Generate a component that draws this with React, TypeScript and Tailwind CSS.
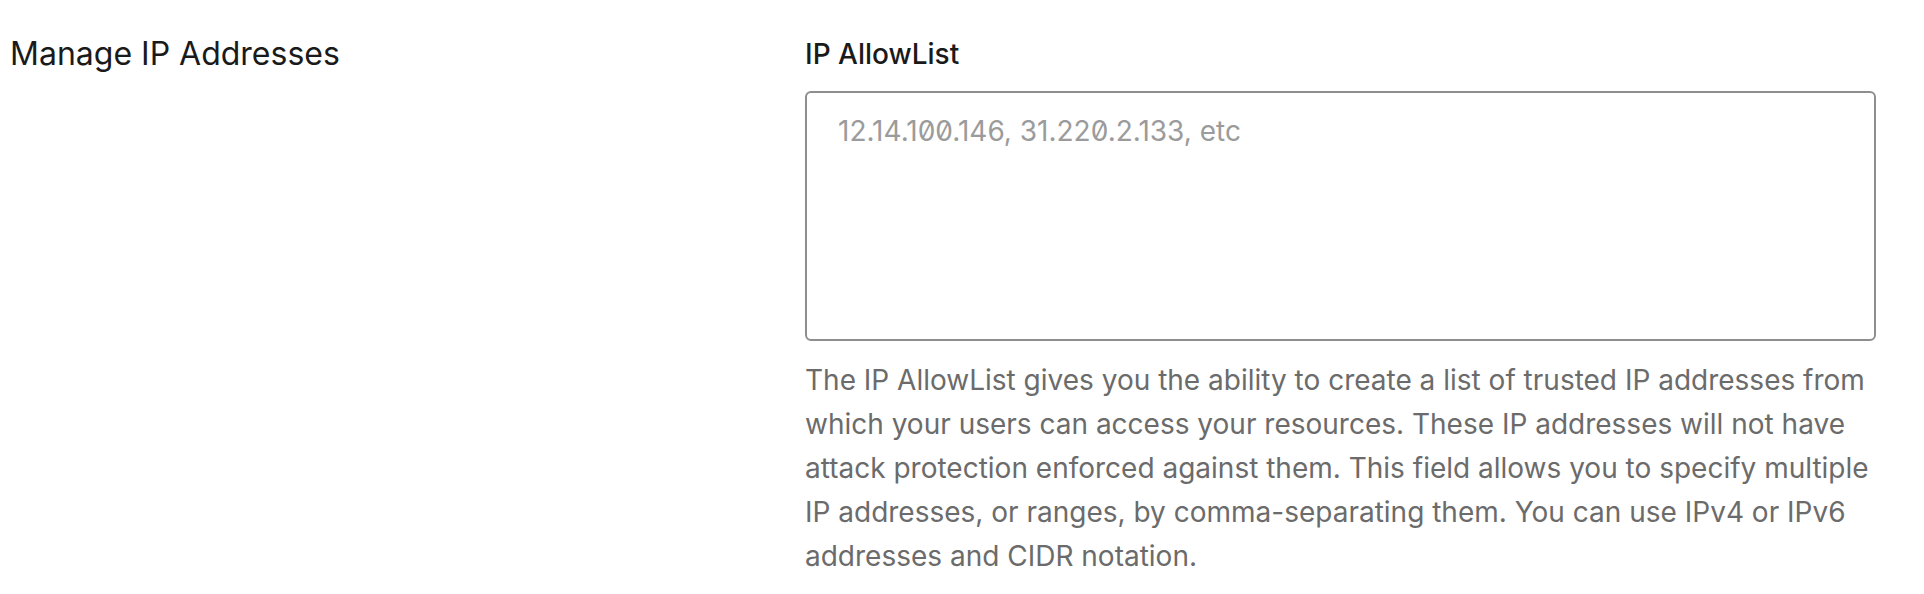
export default function App() {
    return (
        <div className="min-h-[594px] bg-white font-['Inter','Noto_Sans',sans-serif]">
            <div className="grid grid-cols-[795px_1071px] pl-[10px] pt-[34px]">
                <h2 className="text-[32px] leading-[40px] text-[#1a1a1a]">Manage IP Addresses</h2>
                <div className="pt-[2px]">
                    <label
                        htmlFor="allowlist"
                        className="block text-[28px] leading-[36px] font-medium text-[#1a1a1a]"
                    >
                        IP AllowList
                    </label>
                    <textarea
                        id="allowlist"
                        placeholder="12.14.100.146, 31.220.2.133, etc"
                        className="mt-[19px] block h-[250px] w-full resize-none rounded-[6px] border-2 border-[#8e8e8e] px-[31px] pt-[20px] text-[28px] leading-[36px] text-[#1a1a1a] [font-feature-settings:'zero'] outline-none placeholder:text-[#9b9b9b]"
                    />
                    <p className="mt-[17px] text-[28px] leading-[44px] text-[#6b6b6b]">
                        The IP AllowList gives you the ability to create a list of trusted IP addresses from
                        which your users can access your resources. These IP addresses will not have attack
                        protection enforced against them. This field allows you to specify multiple IP
                        addresses, or ranges, by comma-separating them. You can use IPv4 or IPv6 addresses
                        and CIDR notation.
                    </p>
                </div>
            </div>
        </div>
    );
}
